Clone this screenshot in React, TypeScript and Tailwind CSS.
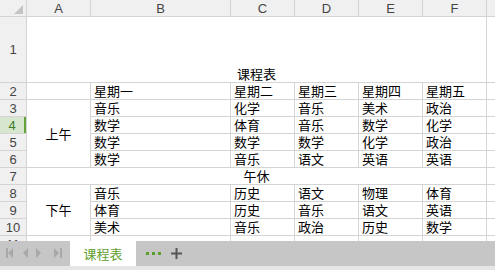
import React from "react";

const cols = ["A", "B", "C", "D", "E", "F", ""];

function Head({ children, active }: { children?: React.ReactNode; active?: boolean }) {
  return (
    <div
      className={
        "flex items-center justify-center font-['Liberation_Sans',Arial,sans-serif] text-[13px] leading-none " +
        (active
          ? "bg-[#d7e7cf] text-[#3f7a2a] border-r-2 border-[#62a33a]"
          : "bg-[#f0f0f0] text-[#444444]")
      }
    >
      {children}
    </div>
  );
}

function Cell({
  children,
  className = "",
}: {
  children?: React.ReactNode;
  className?: string;
}) {
  return (
    <div
      className={
        "bg-white flex items-end px-[3px] text-[13px] leading-[16px] text-black font-['Noto_Sans_CJK_SC',sans-serif] whitespace-nowrap " +
        className
      }
    >
      {children}
    </div>
  );
}

const morning = [
  ["音乐", "化学", "音乐", "美术", "政治"],
  ["数学", "体育", "音乐", "数学", "化学"],
  ["数学", "数学", "数学", "化学", "政治"],
  ["数学", "音乐", "语文", "英语", "英语"],
];
const afternoon = [
  ["音乐", "历史", "语文", "物理", "体育"],
  ["体育", "历史", "音乐", "语文", "英语"],
  ["美术", "音乐", "政治", "历史", "数学"],
];

export default function App() {
  return (
    <div className="w-[495px] h-[270px] overflow-hidden bg-white">
      <div className="grid h-[241px] overflow-hidden gap-px bg-[#d4d4d4] grid-cols-[26px_63px_139px_63px_63px_63px_63px_1fr] grid-rows-[16px_65px_repeat(10,16px)]">
        {/* header row */}
        <div className="bg-[#f0f0f0] relative">
          <svg className="absolute left-[14px] top-[5px]" width="10" height="10" viewBox="0 0 10 10">
            <polygon points="9,0 9,9 0,9" fill="#c4c4c4" />
          </svg>
        </div>
        {cols.map((c, i) => (
          <Head key={i}>{c}</Head>
        ))}

        {/* row 1 */}
        <Head>1</Head>
        <Cell className="col-span-6 justify-center">课程表</Cell>
        <Cell />

        {/* row 2 */}
        <Head>2</Head>
        <Cell />
        {["星期一", "星期二", "星期三", "星期四", "星期五"].map((t) => (
          <Cell key={t}>{t}</Cell>
        ))}
        <Cell />

        {/* rows 3-6 */}
        {morning.map((r, i) => (
          <React.Fragment key={"m" + i}>
            <Head active={i === 1}>{3 + i}</Head>
            {i === 0 && (
              <Cell className="row-span-4 !items-center justify-center">上午</Cell>
            )}
            {r.map((t, j) => (
              <Cell key={j}>{t}</Cell>
            ))}
            <Cell />
          </React.Fragment>
        ))}

        {/* row 7 */}
        <Head>7</Head>
        <Cell className="col-span-6 justify-center">午休</Cell>
        <Cell />

        {/* rows 8-10 */}
        {afternoon.map((r, i) => (
          <React.Fragment key={"a" + i}>
            <Head>{8 + i}</Head>
            {i === 0 && (
              <Cell className="row-span-3 !items-center justify-center">下午</Cell>
            )}
            {r.map((t, j) => (
              <Cell key={j}>{t}</Cell>
            ))}
            <Cell />
          </React.Fragment>
        ))}

        {/* row 11 */}
        <Head>11</Head>
        <Cell />
        <Cell />
        <Cell />
        <Cell />
        <Cell />
        <Cell />
        <Cell />
      </div>

      {/* sheet tab bar */}
      <div className="h-[25px] bg-[#c6c6c6] flex items-stretch">
        <div className="w-[70px] flex items-center">
          <svg width="70" height="25" viewBox="0 0 70 25">
            <g fill="#a8a8a8">
              <rect x="6" y="7" width="2" height="10" />
              <polygon points="13,7 13,17 8,12" />
              <polygon points="28,7 28,17 23,12" />
              <polygon points="36,7 36,17 41,12" />
              <polygon points="54,7 54,17 59,12" />
              <rect x="60" y="7" width="2" height="10" />
            </g>
          </svg>
        </div>
        <div className="w-[66px] bg-white flex items-center justify-center text-[13px] text-[#5f9f2f] font-['Noto_Sans_CJK_SC',sans-serif]">
          课程表
        </div>
        <div className="flex items-center pl-[10px] gap-[3px]">
          <div className="w-[3px] h-[3px] bg-[#5aa02c]" />
          <div className="w-[3px] h-[3px] bg-[#5aa02c]" />
          <div className="w-[3px] h-[3px] bg-[#5aa02c]" />
        </div>
        <div className="flex items-center pl-[10px]">
          <svg width="11" height="11" viewBox="0 0 11 11">
            <rect x="0" y="4.5" width="11" height="2" fill="#555555" />
            <rect x="4.5" y="0" width="2" height="11" fill="#555555" />
          </svg>
        </div>
      </div>
      <div className="h-[4px] bg-[#e6e6e6]" />
    </div>
  );
}
